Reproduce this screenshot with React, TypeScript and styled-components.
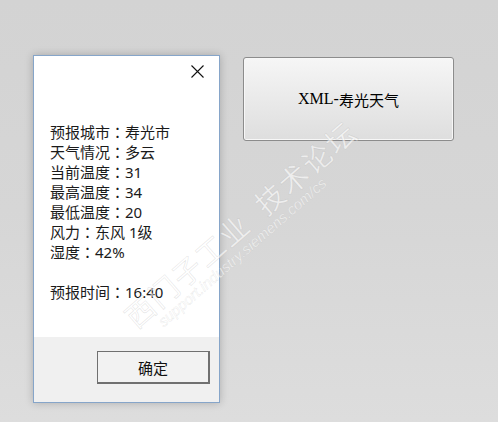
import styled, { createGlobalStyle } from "styled-components";

const GlobalStyle = createGlobalStyle`
  html, body {
    margin: 0;
    padding: 0;
  }
  body {
    width: 498px;
    height: 422px;
    overflow: hidden;
    font-family: "Noto Sans", "Noto Sans CJK SC", sans-serif;
  }
`;

const weather = [
  ["预报城市", "寿光市"],
  ["天气情况", "多云"],
  ["当前温度", "31"],
  ["最高温度", "34"],
  ["最低温度", "20"],
  ["风力", "东风 1级"],
  ["湿度", "42%"],
];

export default function App() {
  return (
    <>
      <GlobalStyle />
      <Page>
        <Dialog>
          <DialogBody>
            <CloseRow>
              <CloseButton aria-label="close">
                <svg width="13" height="13" viewBox="0 0 13 13">
                  <path
                    d="M0.5 0.5 L12.5 12.5 M12.5 0.5 L0.5 12.5"
                    stroke="#111"
                    strokeWidth="1.1"
                    fill="none"
                  />
                </svg>
              </CloseButton>
            </CloseRow>
            <InfoList>
              {weather.map(([k, v]) => (
                <InfoLine key={k}>
                  {k}
                  <Colon>：</Colon>
                  {v}
                </InfoLine>
              ))}
              <InfoLine $gap>
                预报时间<Colon>：</Colon>16:40
              </InfoLine>
            </InfoList>
          </DialogBody>
          <DialogFooter>
            <OkButton>确定</OkButton>
          </DialogFooter>
        </Dialog>

        <XmlButton>
          <Latin>XML-</Latin>寿光天气
        </XmlButton>

        <Watermark>
          <WmTitle>西门子工业&nbsp;&nbsp;技术论坛</WmTitle>
          <WmUrl>support.industry.siemens.com/cs</WmUrl>
        </Watermark>
      </Page>
    </>
  );
}

const Page = styled.div`
  position: relative;
  width: 498px;
  height: 422px;
  box-sizing: border-box;
  padding: 55px 0 0 33px;
  display: flex;
  align-items: flex-start;
  gap: 23px;
  background: linear-gradient(180deg, #d3d3d3 0%, #d6d6d6 50%, #dddddd 100%);
`;

const Dialog = styled.div`
  width: 187px;
  height: 348px;
  box-sizing: border-box;
  border: 1px solid #86a5c9;
  box-shadow: 0 0 8px rgba(0, 0, 0, 0.22);
  display: flex;
  flex-direction: column;
  background: #ffffff;
`;

const DialogBody = styled.div`
  flex: 1;
  background: #ffffff;
`;

const CloseRow = styled.div`
  height: 30px;
  display: flex;
  justify-content: flex-end;
  align-items: center;
  padding-right: 15px;
`;

const CloseButton = styled.div`
  width: 13px;
  height: 13px;
  display: flex;
`;

const InfoList = styled.div`
  margin-top: 36px;
  padding-left: 16px;
`;

const InfoLine = styled.div<{ $gap?: boolean }>`
  font-family: "Noto Sans", "Noto Sans CJK SC", sans-serif;
  font-size: 15px;
  line-height: 20px;
  height: 20px;
  color: #1a1a1a;
  white-space: nowrap;
  margin-top: ${(p) => (p.$gap ? "20px" : "0")};
`;

const Colon = styled.span`
  font-family: "Noto Sans CJK TC", "Noto Sans CJK SC", sans-serif;
`;

const DialogFooter = styled.div`
  height: 65px;
  background: #f0f0f0;
  display: flex;
  justify-content: flex-end;
  align-items: flex-start;
  padding: 14px 9px 0 0;
  box-sizing: border-box;
`;

const OkButton = styled.div`
  width: 113px;
  height: 33px;
  box-sizing: border-box;
  border: 1px solid #707070;
  border-bottom-width: 2px;
  border-right-width: 2px;
  background: #f2f2f2;
  display: flex;
  align-items: center;
  justify-content: center;
  font-family: "Noto Sans CJK SC", sans-serif;
  font-size: 15px;
  color: #111;
`;

const XmlButton = styled.div`
  margin-top: 2px;
  width: 211px;
  height: 84px;
  box-sizing: border-box;
  border: 1px solid #8c8c8c;
  border-radius: 3px;
  box-shadow: inset 0 0 0 1px #f7f7f7;
  background: linear-gradient(180deg, #f6f6f6 0%, #ebebeb 45%, #dedede 100%);
  display: flex;
  align-items: center;
  justify-content: center;
  font-family: "Noto Sans CJK SC", sans-serif;
  font-size: 15px;
  color: #000;
`;

const Latin = styled.span`
  font-family: "Liberation Serif", serif;
  font-size: 16px;
`;

const Watermark = styled.div`
  position: absolute;
  left: 128px;
  top: 304px;
  width: 320px;
  transform: rotate(-41deg);
  transform-origin: 0 16px;
  pointer-events: none;
  display: flex;
  flex-direction: column;
  align-items: flex-start;
`;

const WmTitle = styled.div`
  font-family: "Noto Sans CJK SC", sans-serif;
  font-size: 29px;
  line-height: 32px;
  color: rgba(255, 255, 255, 0.6);
  -webkit-text-stroke: 0.6px rgba(150, 150, 150, 0.25);
  white-space: nowrap;
  letter-spacing: 2px;
`;

const WmUrl = styled.div`
  margin-left: 22px;
  font-family: "Liberation Sans", sans-serif;
  font-style: italic;
  font-size: 15px;
  line-height: 16px;
  color: rgba(255, 255, 255, 0.6);
  -webkit-text-stroke: 0.5px rgba(150, 150, 150, 0.2);
  white-space: nowrap;
`;
